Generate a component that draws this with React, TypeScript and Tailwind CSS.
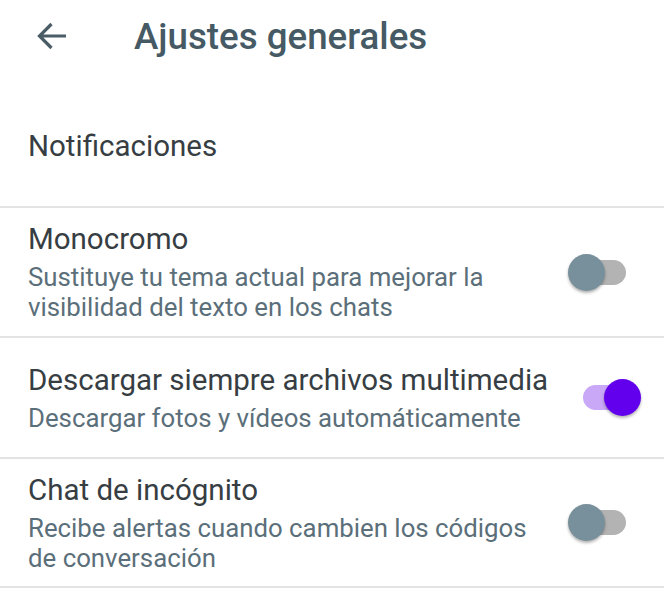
import React from "react";

function Toggle({ on }: { on: boolean }) {
  return (
    <div className="relative w-[73px] h-[37px] shrink-0">
      <div
        className={
          on
            ? "absolute left-[15px] top-[6px] w-[43px] h-[25px] rounded-full bg-[#c9a8f7]"
            : "absolute left-[15px] top-[6px] w-[43px] h-[25px] rounded-full bg-[#b3b3b3]"
        }
      />
      <div
        className={
          on
            ? "absolute top-0 left-[36px] w-[37px] h-[37px] rounded-full bg-[#6200ee] shadow-[0_2px_3px_rgba(0,0,0,0.3)]"
            : "absolute top-0 left-0 w-[37px] h-[37px] rounded-full bg-[#78909c] shadow-[0_2px_3px_rgba(0,0,0,0.3)]"
        }
      />
    </div>
  );
}

function Row({
  title,
  lines,
  on,
  h,
}: {
  title: string;
  lines: string[];
  on: boolean;
  h: string;
}) {
  return (
    <div className={`${h} border-t-2 border-[#e3e3e3] flex items-center pl-[28px] pr-[23px]`}>
      <div className="flex-1 min-w-0 flex flex-col">
        <div className="text-[29.5px] leading-[35px] text-[#373e43] whitespace-nowrap">{title}</div>
        <div className="mt-[5px] flex flex-col">
          {lines.map((l) => (
            <div key={l} className="text-[25.8px] leading-[30px] text-[#5b6f7a] whitespace-nowrap">
              {l}
            </div>
          ))}
        </div>
      </div>
      <Toggle on={on} />
    </div>
  );
}

export default function App() {
  return (
    <div
      className="w-[664px] h-[592px] bg-white overflow-hidden"
      style={{ fontFamily: "Roboto, 'Noto Sans', sans-serif" }}
    >
      <div className="h-[72px] flex items-center">
        <div className="w-[134px] flex items-center pl-[37px]">
          <svg width="30" height="28" viewBox="0 0 30 28" fill="none">
            <path
              d="M29 14H3M14.5 2L2.5 14L14.5 26"
              stroke="#4a5d67"
              strokeWidth="3.2"
              strokeLinecap="butt"
              strokeLinejoin="miter"
            />
          </svg>
        </div>
        <div className="text-[36.7px] leading-[43px] font-medium text-[#455a64]">Ajustes generales</div>
      </div>
      <div className="h-[134px] pl-[28px] pt-[57px]">
        <div className="text-[29.5px] leading-[35px] text-[#373e43]">Notificaciones</div>
      </div>
      <Row
        h="h-[130px]"
        title="Monocromo"
        lines={["Sustituye tu tema actual para mejorar la", "visibilidad del texto en los chats"]}
        on={false}
      />
      <Row
        h="h-[121px]"
        title="Descargar siempre archivos multimedia"
        lines={["Descargar fotos y vídeos automáticamente"]}
        on={true}
      />
      <Row
        h="h-[129px]"
        title="Chat de incógnito"
        lines={["Recibe alertas cuando cambien los códigos", "de conversación"]}
        on={false}
      />
      <div className="h-[2px] bg-[#e3e3e3]" />
    </div>
  );
}
